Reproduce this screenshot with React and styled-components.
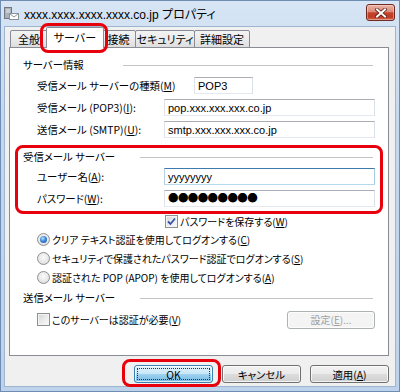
import React from 'react';
import styled, { createGlobalStyle, css } from 'styled-components';

const GlobalStyle = createGlobalStyle`
  html, body { margin: 0; padding: 0; background: #ffffff; }
  * { box-sizing: border-box; }
`;

const Window = styled.div`
  width: 400px;
  height: 392px;
  display: flex;
  flex-direction: column;
  border: 1px solid #6f8db3;
  background: linear-gradient(180deg, #d7e5f5 0%, #c4d8ee 30%, #bdd3eb 100%);
  font-family: "Noto Sans CJK JP", sans-serif;
  font-size: 10.4px;
  font-feature-settings: "palt";
  color: #000;
`;

const TitleBar = styled.div`
  height: 25px;
  flex: none;
  display: flex;
  align-items: center;
  padding: 0 4px 0 3px;
`;

const TitleText = styled.div`
  margin-left: 5px;
  font-family: "Liberation Sans", "Noto Sans CJK JP", sans-serif;
  font-size: 12px;
  white-space: nowrap;
`;

const CloseButton = styled.div`
  margin-left: auto;
  align-self: flex-start;
  margin-top: 3px;
  width: 29px;
  height: 17px;
  border: 1px solid #6e2a20;
  border-radius: 3px;
  background: linear-gradient(180deg, #ebb2a3 0%, #db8a78 45%, #c4442c 52%, #c23a22 80%, #d66c55 100%);
  box-shadow: inset 0 0 0 1px rgba(255, 255, 255, 0.35);
  display: flex;
  align-items: center;
  justify-content: center;
`;

const Client = styled.div`
  flex: 1;
  margin: 0 3px 4px;
  border: 1px solid #9fb5cf;
  background: #f0f0f0;
  padding: 0 6px 0 4px;
  display: flex;
  flex-direction: column;
`;

const TabStrip = styled.div`
  height: 21px;
  flex: none;
  display: flex;
  align-items: flex-end;
  padding-left: 2px;
  position: relative;
  z-index: 1;
`;

const Tab = styled.div`
  position: relative;
  width: ${(p) => p.$w}px;
  height: 18px;
  margin-left: -1px;
  display: flex;
  align-items: center;
  justify-content: center;
  border: 1px solid #898c95;
  border-radius: 2px 2px 0 0;
  background: linear-gradient(180deg, #f3f3f3 0%, #ebebeb 50%, #dedede 100%);
  font-size: 11px;
  white-space: nowrap;
  ${(p) =>
    p.$active &&
    css`
      height: 21px;
      width: ${p.$w + 4}px;
      margin: 0 -2px;
      border-bottom: none;
      background: #ffffff;
      z-index: 2;
      padding-bottom: 2px;
    `}
`;

const Callout = styled.div`
  position: absolute;
  top: ${(p) => p.$t}px;
  right: ${(p) => p.$r}px;
  bottom: ${(p) => p.$b}px;
  left: ${(p) => p.$l}px;
  border: 3px solid #e8000d;
  border-radius: 8px;
  pointer-events: none;
`;

const Panel = styled.div`
  margin-top: -1px;
  height: 309px;
  flex: none;
  background: #ffffff;
  border: 1px solid #898c95;
  padding: 8px 13px 0;
  display: flex;
  flex-direction: column;
`;

const Heading = styled.div`
  height: 16px;
  margin-top: ${(p) => p.$mt || 0}px;
  display: flex;
  align-items: center;
`;

const HeadingText = styled.span`
  width: ${(p) => p.$w}px;
  flex: none;
  white-space: nowrap;
`;

const Rule = styled.div`
  flex: 1;
  height: 1px;
  margin: 2px 2px 0 0;
  background: #c4c4c4;
`;

const FieldRow = styled.div`
  height: 17px;
  margin-top: ${(p) => (p.$mt === undefined ? 5 : p.$mt)}px;
  padding-left: 14px;
  display: flex;
  align-items: center;
`;

const FieldLabel = styled.label`
  width: ${(p) => p.$w}px;
  flex: none;
  white-space: nowrap;
`;

const TextBox = styled.div`
  flex: ${(p) => (p.$w ? 'none' : 1)};
  width: ${(p) => (p.$w ? `${p.$w}px` : 'auto')};
  height: 17px;
  padding: 0 3px;
  display: flex;
  align-items: center;
  border: 1px solid;
  border-color: #abadb3 #dbdfe6 #e3e9ef #e2e3ea;
  background: #ffffff;
  font-family: "Liberation Sans", "Noto Sans CJK JP", sans-serif;
  font-size: 11px;
  white-space: nowrap;
  ${(p) =>
    p.$focused &&
    css`
      border-color: #3d7bad #a4c9e3 #b7d9ed #b5cfe7;
    `}
`;

const Dots = styled.span`
  font-family: "Noto Sans CJK JP", sans-serif;
  font-feature-settings: normal;
  font-size: 10.5px;
  letter-spacing: -0.6px;
  line-height: 1;
`;

const RedBox = styled.div`
  margin: 7px -8px 0;
  padding: 0 5px 4px;
  border: 3px solid #e8000d;
  border-radius: 8px;
`;

const OptionRow = styled.div`
  height: ${(p) => p.$h || 16}px;
  margin-top: ${(p) => p.$mt || 0}px;
  padding-left: ${(p) => p.$indent}px;
  display: flex;
  align-items: center;
  font-size: 10px;
  white-space: nowrap;
`;

const RadioMark = styled.span`
  position: relative;
  width: 13px;
  height: 13px;
  flex: none;
  margin-right: 2px;
  border: 1px solid #8f8f8f;
  border-radius: 50%;
  background: radial-gradient(circle at 50% 40%, #fbfbfb 0%, #e6e6e6 60%, #d2d2d2 100%);
  ${(p) =>
    p.$checked &&
    css`
      &::after {
        content: '';
        position: absolute;
        inset: 2px;
        border-radius: 50%;
        background: radial-gradient(circle at 40% 35%, #b9e4ff 0%, #3d86d8 45%, #1d4fa8 100%);
      }
    `}
`;

const CheckMark = styled.span`
  width: 13px;
  height: 13px;
  flex: none;
  margin-right: 2px;
  border: 1px solid #8e8f8f;
  background: linear-gradient(135deg, #d0d3d8 0%, #eeeeee 60%, #fafafa 100%);
  box-shadow: inset 0 0 0 1px #f4f4f4;
  display: flex;
  align-items: center;
  justify-content: center;
`;

const SideButton = styled.div`
  margin-left: auto;
`;

const ButtonBar = styled.div`
  margin-top: 9px;
  display: flex;
  justify-content: flex-end;
  gap: 9px;
`;

const PushButton = styled.div`
  position: relative;
  width: ${(p) => p.$w || 79}px;
  height: 18px;
  display: flex;
  align-items: center;
  justify-content: center;
  border: 1px solid #707070;
  border-radius: 3px;
  background: linear-gradient(180deg, #f2f2f2 0%, #ebebeb 48%, #dddddd 52%, #cfcfcf 100%);
  box-shadow: inset 0 0 0 1px rgba(255, 255, 255, 0.75);
  white-space: nowrap;
  ${(p) =>
    p.$default &&
    css`
      border-color: #3c7fb1;
      background: linear-gradient(180deg, #e3f3fc 0%, #c8e7f8 48%, #9fd2f0 52%, #74b8e2 100%);
      &::after {
        content: '';
        position: absolute;
        inset: 2px;
        border: 1px dotted #333;
      }
    `}
  ${(p) =>
    p.$disabled &&
    css`
      border-color: #adb2b5;
      background: #f4f4f4;
      color: #a0a0a0;
    `}
`;

const AppIcon = () => (
  <svg width="15" height="15" viewBox="0 0 15 15">
    <rect x="0.5" y="1.5" width="7" height="11" fill="#a9b1ba" stroke="#6f7780" />
    <line x1="2" y1="4" x2="6" y2="4" stroke="#e8ecf0" />
    <line x1="2" y1="6" x2="6" y2="6" stroke="#e8ecf0" />
    <rect x="5.5" y="7.5" width="9" height="6" fill="#ffffff" stroke="#8a939c" />
    <polyline points="5.5,7.5 10,11 14.5,7.5" fill="none" stroke="#8a939c" />
  </svg>
);

const CloseGlyph = () => (
  <svg width="12" height="10" viewBox="0 0 12 10">
    <path d="M2 1.5 L10 8.5 M10 1.5 L2 8.5" stroke="#5a1e16" strokeWidth="3.6" strokeLinecap="square" />
    <path d="M2 1.5 L10 8.5 M10 1.5 L2 8.5" stroke="#ffffff" strokeWidth="2" strokeLinecap="square" />
  </svg>
);

const Tick = () => (
  <svg width="9" height="9" viewBox="0 0 9 9">
    <path d="M1 4.5 L3.5 7 L8 1.5" fill="none" stroke="#3553a8" strokeWidth="1.8" />
  </svg>
);

const tabs = [
  { label: '全般', w: 38 },
  { label: 'サーバー', w: 54, active: true },
  { label: '接続', w: 35 },
  { label: 'セキュリティ', w: 60 },
  { label: '詳細設定', w: 56 },
];

const radios = [
  { text: 'クリア テキスト認証を使用してログオンする', key: 'C', checked: true },
  { text: 'セキュリティで保護されたパスワード認証でログオンする', key: 'S' },
  { text: '認証された POP (APOP) を使用してログオンする', key: 'A' },
];

const Acc = ({ k }) => (
  <>
    (<u>{k}</u>)
  </>
);

const App = () => (
  <>
    <GlobalStyle />
    <Window>
      <TitleBar>
        <AppIcon />
        <TitleText>xxxx.xxxx.xxxx.xxxx.co.jp プロパティ</TitleText>
        <CloseButton>
          <CloseGlyph />
        </CloseButton>
      </TitleBar>
      <Client>
        <TabStrip>
          {tabs.map((t) => (
            <Tab key={t.label} $w={t.w} $active={t.active}>
              {t.label}
              {t.active && <Callout $t={-5} $r={-5} $b={-5} $l={-7} />}
            </Tab>
          ))}
        </TabStrip>
        <Panel>
          <Heading>
            <HeadingText $w={100}>サーバー情報</HeadingText>
            <Rule />
          </Heading>
          <FieldRow>
            <FieldLabel $w={157}>
              受信メール サーバーの種類<Acc k="M" />
            </FieldLabel>
            <TextBox $w={59}>POP3</TextBox>
          </FieldRow>
          <FieldRow>
            <FieldLabel $w={127}>
              受信メール (POP3)<Acc k="I" />:
            </FieldLabel>
            <TextBox>pop.xxx.xxx.xxx.co.jp</TextBox>
          </FieldRow>
          <FieldRow>
            <FieldLabel $w={127}>
              送信メール (SMTP)<Acc k="U" />:
            </FieldLabel>
            <TextBox>smtp.xxx.xxx.xxx.co.jp</TextBox>
          </FieldRow>

          <RedBox>
            <Heading>
              <HeadingText $w={117}>受信メール サーバー</HeadingText>
              <Rule />
            </Heading>
            <FieldRow $mt={4}>
              <FieldLabel $w={127}>
                ユーザー名<Acc k="A" />:
              </FieldLabel>
              <TextBox $focused>yyyyyyyy</TextBox>
            </FieldRow>
            <FieldRow>
              <FieldLabel $w={127}>
                パスワード<Acc k="W" />:
              </FieldLabel>
              <TextBox>
                <Dots>●●●●●●●●●</Dots>
              </TextBox>
            </FieldRow>
          </RedBox>

          <OptionRow $h={14} $indent={142}>
            <CheckMark>
              <Tick />
            </CheckMark>
            パスワードを保存する<Acc k="W" />
          </OptionRow>
          {radios.map((r) => (
            <OptionRow key={r.key} $indent={14} $mt={3}>
              <RadioMark $checked={r.checked} />
              {r.text}
              <Acc k={r.key} />
            </OptionRow>
          ))}

          <Heading $mt={4}>
            <HeadingText $w={117}>送信メール サーバー</HeadingText>
            <Rule />
          </Heading>
          <OptionRow $h={17} $indent={14} $mt={6}>
            <CheckMark />
            このサーバーは認証が必要<Acc k="V" />
            <SideButton>
              <PushButton $w={88} $disabled>
                設定<Acc k="E" />...
              </PushButton>
            </SideButton>
          </OptionRow>
        </Panel>
        <ButtonBar>
          <PushButton $default>
            OK
            <Callout $t={-7} $r={-9} $b={-5} $l={-13} />
          </PushButton>
          <PushButton>キャンセル</PushButton>
          <PushButton>
            適用<Acc k="A" />
          </PushButton>
        </ButtonBar>
      </Client>
    </Window>
  </>
);

export default App;
